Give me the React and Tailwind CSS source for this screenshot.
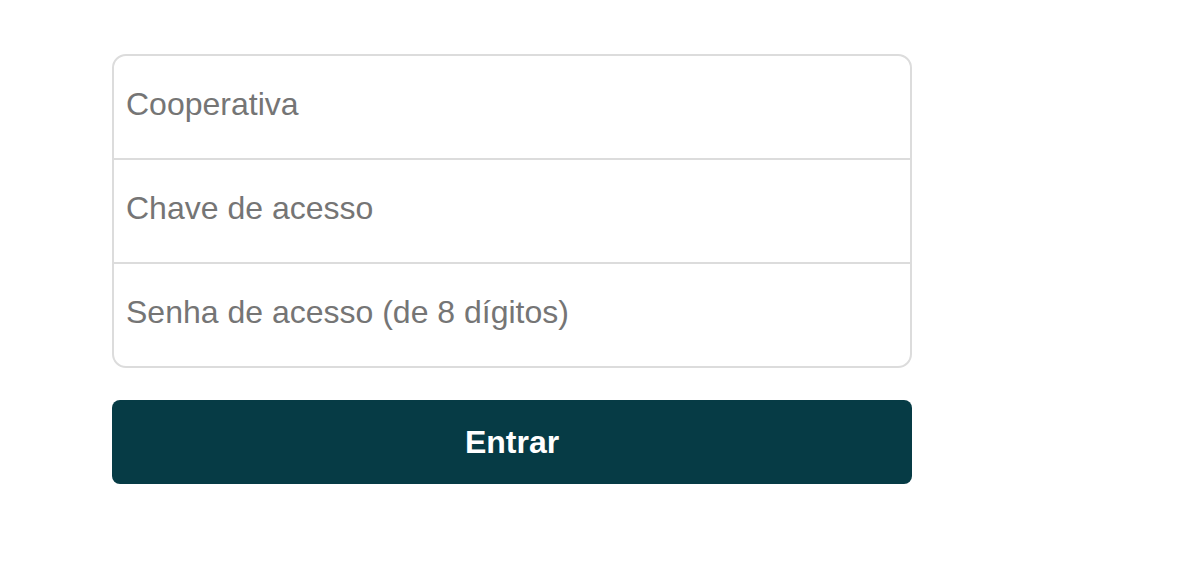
export default function App() {
  const fields = ["Cooperativa", "Chave de acesso", "Senha de acesso (de 8 dígitos)"];
  return (
    <div className="w-[1190px] h-[564px] bg-white pt-[54px] pl-[112px]" style={{ fontFamily: '"Liberation Sans", Arial, sans-serif' }}>
      <div className="w-[800px] flex flex-col">
        <div className="border-2 border-[#dcdcdc] rounded-[14px] flex flex-col">
          {fields.map((f, i) => (
            <div key={f} className={`flex items-center pl-[12px] pb-[6px] ${i > 0 ? "h-[104px] border-t-2 border-[#dcdcdc]" : "h-[102px]"}`}>
              <span className="text-[32px] text-[#757575]">{f}</span>
            </div>
          ))}
        </div>
        <button className="mt-[32px] h-[84px] w-full rounded-[8px] bg-[#063b45] text-white font-bold text-[32px] flex items-center justify-center">
          Entrar
        </button>
      </div>
    </div>
  );
}
